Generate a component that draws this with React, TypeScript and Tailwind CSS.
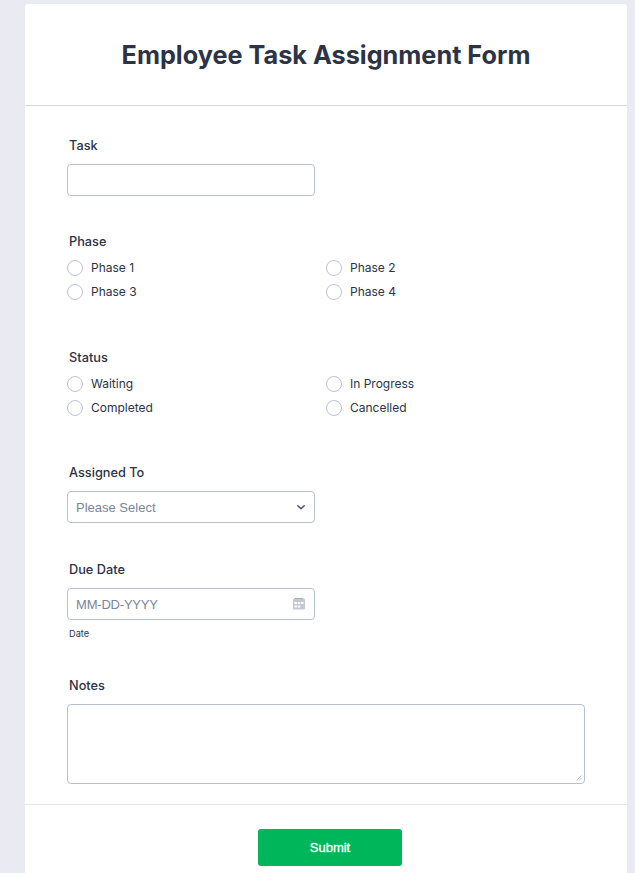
const labelClass = 'block text-[12.75px] leading-[20px] font-medium text-[#2c3345]'
const boxClass = 'w-[248px] h-[32px] rounded-[4px] border border-[#b8bfcf] bg-white'
const placeholderClass = "pt-[2px] text-[13px] text-[#7b849a] font-['Liberation_Sans',sans-serif]"

function RadioGroup({ label, options }: { label: string; options: string[] }) {
  return (
    <div>
      <span className={labelClass}>{label}</span>
      <div className="grid grid-cols-[259px_1fr] gap-y-2 mt-[8px] -ml-[2px]">
        {options.map((option) => (
          <label key={option} className="flex items-center gap-2 h-4">
            <span className="w-4 h-4 rounded-full border border-[#bcc3d3] bg-white" />
            <span className="text-xs leading-4 text-[#2c3345]">{option}</span>
          </label>
        ))}
      </div>
    </div>
  )
}

export default function App() {
  return (
    <div className="h-[873px] overflow-hidden bg-[#e9eaf2] pt-1 pl-[25px] pr-2 font-['Inter',sans-serif]">
      <div className="bg-white rounded-t-[3px] h-[900px]">
        {/* Header */}
        <header className="h-[102px] border-b border-[#d3d6df] flex items-center justify-center">
          <h1 className="text-[25.25px] leading-8 font-bold text-[#2c3345]">Employee Task Assignment Form</h1>
        </header>

        <form className="pl-[44px]">
          <div className="pt-[30px]">
            <label className={labelClass}>Task</label>
            <div className={`${boxClass} mt-[8px] -ml-[2px]`} />
          </div>

          <div className="mt-[36px]">
            <RadioGroup label="Phase" options={['Phase 1', 'Phase 2', 'Phase 3', 'Phase 4']} />
          </div>

          <div className="mt-[48px]">
            <RadioGroup label="Status" options={['Waiting', 'In Progress', 'Completed', 'Cancelled']} />
          </div>

          <div className="mt-[47px]">
            <label className={labelClass}>Assigned To</label>
            <div className={`${boxClass} mt-[8px] -ml-[2px] flex items-center justify-between pl-2 pr-2`}>
              <span className={placeholderClass}>Please Select</span>
              <svg width="8" height="5" viewBox="0 0 8 5" fill="none" className="mr-[1px]">
                <path d="M0.8 0.8L4 3.8L7.2 0.8" stroke="#4a5068" strokeWidth="1.5" strokeLinecap="round" strokeLinejoin="round" />
              </svg>
            </div>
          </div>

          <div className="mt-[37px]">
            <label className={labelClass}>Due Date</label>
            <div className={`${boxClass} mt-[8px] -ml-[2px] flex items-center justify-between pl-2 pr-[9px]`}>
              <span className={`${placeholderClass} tracking-[-0.2px]`}>MM-DD-YYYY</span>
              <svg width="12" height="12" viewBox="0 0 12 12">
                <rect x="0" y="0.5" width="12" height="11" rx="1" fill="#c4c8d2" />
                <rect x="2" y="0" width="8" height="1" fill="#a6abb9" />
                <g fill="#ffffff">
                  <rect x="1.5" y="4" width="2.4" height="2" />
                  <rect x="4.8" y="4" width="2.4" height="2" />
                  <rect x="8.1" y="4" width="2.4" height="2" />
                  <rect x="1.5" y="7.5" width="2.4" height="2" />
                  <rect x="4.8" y="7.5" width="2.4" height="2" />
                </g>
              </svg>
            </div>
            <span className="block mt-[8px] text-[9.25px] leading-3 text-[#2c3345]">Date</span>
          </div>

          <div className="mt-[36px]">
            <label className={labelClass}>Notes</label>
            <div className="relative mt-[8px] -ml-[2px] w-[518px] h-[80px] rounded-[4px] border border-[#b8bfcf] bg-white">
              <svg width="6" height="6" viewBox="0 0 6 6" className="absolute right-[2px] bottom-[2px]">
                <path d="M0.5 5.5L5.5 0.5M3 5.5L5.5 3" stroke="#b8bcc8" strokeWidth="1" />
              </svg>
            </div>
          </div>
        </form>

        {/* Footer */}
        <div className="mt-[20px] border-t border-[#e3e5eb] pt-[24px] flex justify-center pl-[8px]">
          <button type="button" className="w-[144px] h-[37px] rounded-[3px] bg-[#00b65b] text-[13px] font-normal text-white font-['Liberation_Sans',sans-serif] [-webkit-text-stroke:0.3px_white]">
            Submit
          </button>
        </div>
      </div>
    </div>
  )
}
